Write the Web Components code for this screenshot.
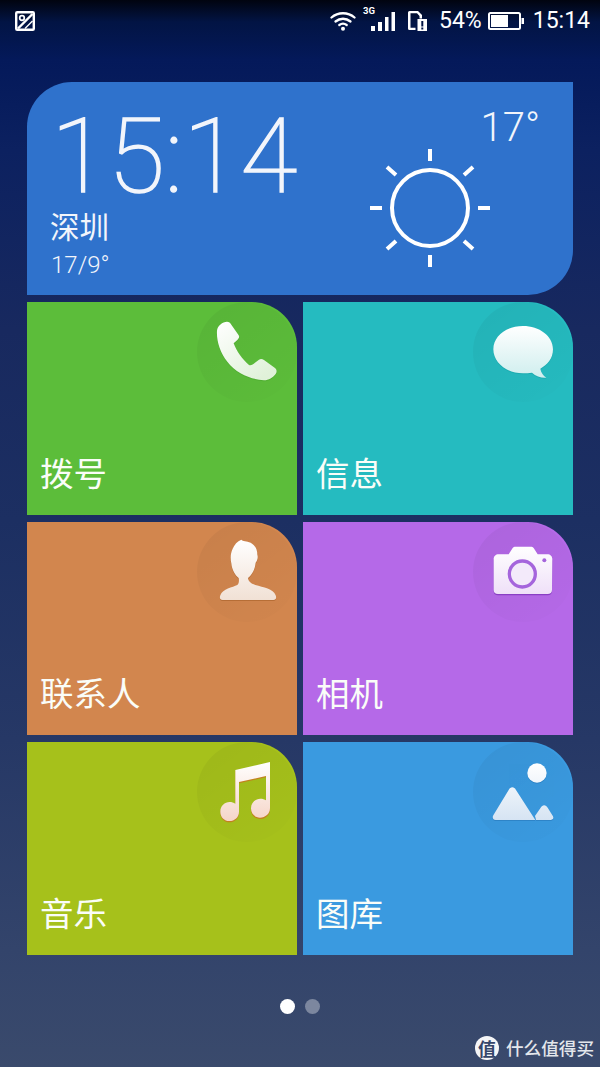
<!DOCTYPE html>
<html lang="zh-CN">
<head>
<meta charset="utf-8">
<title>Home</title>
<style>
html,body{margin:0;padding:0;width:600px;height:1067px;overflow:hidden}
body{font-family:Roboto,"Noto Sans CJK SC",sans-serif;color:#fff}
</style>
</head>
<body>
<home-screen>
  <status-bar slot="status"></status-bar>
  <weather-card slot="tiles" time="15:14" city="深圳" range="17/9°" temp="17°"></weather-card>
  <app-tile slot="tiles" label="拨号" icon="phone" color="#5cbd3a"></app-tile>
  <app-tile slot="tiles" label="信息" icon="message" color="#25bbc0"></app-tile>
  <app-tile slot="tiles" label="联系人" icon="contact" color="#d2864e"></app-tile>
  <app-tile slot="tiles" label="相机" icon="camera" color="#b569e8"></app-tile>
  <app-tile slot="tiles" label="音乐" icon="music" color="#a6c11b"></app-tile>
  <app-tile slot="tiles" label="图库" icon="gallery" color="#3a9ae0"></app-tile>
  <page-dots slot="dots"></page-dots>
  <site-mark slot="mark"></site-mark>
</home-screen>
<script>
const define=(name,css,html)=>{
  customElements.define(name,class extends HTMLElement{
    connectedCallback(){
      if(this.shadowRoot)return;
      const r=this.attachShadow({mode:'open'});
      r.innerHTML=`<style>${css}</style>${typeof html==='function'?html(this):html}`;
    }
  });
};

define('home-screen',`
:host{display:flex;flex-direction:column;position:relative;width:600px;height:1067px;overflow:hidden;
background:linear-gradient(180deg,#01040f 0,#021444 22px,#04195a 60px,#0c2160 150px,#18295f 330px,#1c2f62 520px,#263866 740px,#33446b 950px,#3a4a6c 1067px)}
.grid{display:grid;grid-template-columns:270px 270px;grid-auto-rows:213px;column-gap:6px;row-gap:7px;margin:42px 27px 0}
.dots{margin-top:44px}
`,`<slot name="status"></slot><div class="grid"><slot name="tiles"></slot></div><div class="dots"><slot name="dots"></slot></div><slot name="mark"></slot>`);

define('status-bar',`
:host{display:flex;align-items:center;height:40px;padding:2px 10px 0 15px;box-sizing:border-box;font:400 23px/38px Roboto,sans-serif;color:#fff}
svg{display:block;flex:none}
.sp{flex:1}
.net{position:relative;margin-left:15px;width:24px;height:38px}
.net b{position:absolute;left:-8px;top:3px;font:700 9.5px/11px Roboto,sans-serif}
.net svg{position:absolute;left:0;top:10px}
`,`
<svg width="20" height="20" viewBox="0 0 20 20"><rect x="1.200" y="1.200" width="17.600" height="17.600" rx="1" fill="none" stroke="#fff" stroke-width="2.400"/><path d="M3 17.500 17.500 3" stroke="#fff" stroke-width="2.400"/><circle cx="7" cy="7" r="2.300" fill="none" stroke="#fff" stroke-width="1.700"/><path fill="none" stroke="#fff" stroke-width="1.500" d="M10 17.500 17.500 10"/></svg>
<div class="sp"></div>
<svg width="26" height="20" viewBox="0 0 26 20"><g fill="none" stroke="#fff" stroke-width="2.300" stroke-linecap="round"><path d="M1.500 6.500C8 .8 18 .8 24.500 6.500"/><path d="M5.500 10.500C10 6.800 16 6.800 20.500 10.500"/><path d="M9.300 14C11.500 12.400 14.500 12.400 16.700 14"/></g><circle cx="13" cy="17.700" r="2" fill="#fff"/></svg>
<div class="net"><b>3G</b><svg width="24" height="20" viewBox="0 0 24 20"><g fill="#fff"><rect x="0" y="14" width="4" height="5"/><rect x="7" y="10" width="4" height="9"/><rect x="14" y="5" width="3.500" height="14"/><rect x="20.500" y="0" width="3.500" height="19"/></g></svg></div>
<svg width="19" height="20" viewBox="0 0 19 20" style="margin-left:13px"><path fill="#fff" fill-rule="evenodd" d="M1.500 0H10l4 4v3.500h-2.500V5L9 2.300H2.500v14.500h5V19H1.500A1.500 1.500 0 0 1 0 17.500v-16A1.500 1.500 0 0 1 1.500 0z"/><path fill="#fff" fill-rule="evenodd" d="M9.500 8H19v12H9.500zM13.300 10v5.500h2V10zm0 6.500v2h2v-2z"/></svg>
<span style="margin-left:12px">54%</span>
<svg width="36" height="18" viewBox="0 0 36 18" style="margin-left:6px"><rect x="1" y="1" width="31" height="16" rx="1.500" fill="none" stroke="#fff" stroke-width="2"/><rect x="3" y="3" width="17" height="12" fill="#fff"/><rect x="33.500" y="6" width="2.500" height="6" fill="#fff"/></svg>
<span style="margin-left:9px">15:14</span>
`);

define('weather-card',`
:host{display:flex;grid-column:1 / span 2;justify-content:space-between;background:#2f72cc;border-radius:45px 0 45px 0;color:#f2f5fb;font-family:Roboto,"Noto Sans CJK SC",sans-serif}
.l{padding:25px 0 0 24px;display:flex;flex-direction:column}
.t{font:100 104px/100px Roboto,sans-serif;-webkit-text-stroke:1.500px #f2f5fb;height:100px}
.c{font:400 29.500px/36px "Noto Sans CJK SC",sans-serif;margin:0 0 0 -1px}
.r{font:300 24px/28px Roboto,sans-serif;margin-top:8px}
.w{display:flex;flex-direction:column;align-items:flex-end;padding:22px 33px 0 0}
.d{font:300 40px/48px Roboto,sans-serif}
svg{display:block;margin:-6px 48px 0 0}
`,h=>`
<div class="l"><div class="t">${h.getAttribute('time')}</div><div class="c">${h.getAttribute('city')}</div><div class="r">${h.getAttribute('range')}</div></div>
<div class="w"><div class="d">${h.getAttribute('temp')}</div>
<svg width="124" height="124" viewBox="-62 -62 124 124"><circle r="38" fill="none" stroke="#fff" stroke-width="4"/><g stroke="#fff" stroke-width="4"><path d="M0-59V-47M0 47V59M-60 0H-48M48 0H60M-43-41-34-33M43-41 34-33M-43 41-34 33M43 41 34 33"/></g></svg></div>
`);

const ICONS={
phone:`<g transform="translate(-17 -2) scale(.3333)"><defs><linearGradient id="g" x1="0" y1="0" x2=".7" y2="1"><stop offset="0" stop-color="#fff"/><stop offset="1" stop-color="#e0f1d9"/></linearGradient></defs><path fill="#3f9a25" opacity=".35" transform="translate(0 3)" d="M111 92C112 78 128 65 141 65C147 65 151 69 154 74L176 106C179 111 177 115 172 120L161 130C170 155 187 178 207 195C214 197 219 193 225 188L237 179C242 176 247 177 252 180L285 204C291 209 291 216 287 222C279 233 266 241 252 241C215 238 170 222 142 185C120 158 109 120 111 92Z"/><path fill="url(#g)" d="M111 92C112 78 128 65 141 65C147 65 151 69 154 74L176 106C179 111 177 115 172 120L161 130C170 155 187 178 207 195C214 197 219 193 225 188L237 179C242 176 247 177 252 180L285 204C291 209 291 216 287 222C279 233 266 241 252 241C215 238 170 222 142 185C120 158 109 120 111 92Z"/></g>`,
message:`<g transform="translate(-13 -2) scale(.3333)"><defs><linearGradient id="g" x1="0" y1="0" x2="0" y2="1"><stop offset="0" stop-color="#fff"/><stop offset="1" stop-color="#cfeeee"/></linearGradient></defs><path fill="#129aa0" opacity=".4" transform="translate(0 3)" d="M189 78C238 78 279 108 279 148C279 176 262 195 241 206C243 217 249 226 259 233C243 234 228 229 216 218C207 219 198 220 189 220C140 220 100 188 100 148C100 108 140 78 189 78Z"/><path fill="url(#g)" d="M189 78C238 78 279 108 279 148C279 176 262 195 241 206C243 217 249 226 259 233C243 234 228 229 216 218C207 219 198 220 189 220C140 220 100 188 100 148C100 108 140 78 189 78Z"/></g>`,
contact:`<g transform="translate(-17 -2) scale(.3333)"><defs><linearGradient id="g" x1="0" y1="0" x2="0" y2="1"><stop offset="0" stop-color="#fff"/><stop offset="1" stop-color="#f1e1d5"/></linearGradient></defs><path fill="#a75f28" opacity=".6" transform="translate(0 3)" d="M184 59C188 65 200 62 212 68C226 76 232 90 232 104C235 112 232 122 227 128C225 148 216 164 204 174C205 184 212 190 226 195C250 202 280 206 287 226C290 234 288 240 280 240H128C120 240 118 234 121 226C128 206 158 202 172 195C176 192 178 184 176 174C165 166 156 150 154 130C151 118 151 100 158 86C163 74 172 64 184 59Z"/><path fill="url(#g)" d="M184 59C188 65 200 62 212 68C226 76 232 90 232 104C235 112 232 122 227 128C225 148 216 164 204 174C205 184 212 190 226 195C250 202 280 206 287 226C290 234 288 240 280 240H128C120 240 118 234 121 226C128 206 158 202 172 195C176 192 178 184 176 174C165 166 156 150 154 130C151 118 151 100 158 86C163 74 172 64 184 59Z"/></g>`,
camera:`<g transform="translate(-13 -2) scale(.3333)"><defs><linearGradient id="g" x1="0" y1="0" x2="0" y2="1"><stop offset="0" stop-color="#fff"/><stop offset="1" stop-color="#efe0f8"/></linearGradient></defs><path fill="#8a3fc4" transform="translate(0 4)" d="M116 103H146L158 84C160 81 163 80 167 80H212C216 80 219 81 221 84L233 103H262C271 103 277 109 277 118L276 210C276 218 271 222 263 222H114C106 222 101 218 101 210L101 118C101 109 107 103 116 103Z"/><path fill="url(#g)" d="M116 103H146L158 84C160 81 163 80 167 80H212C216 80 219 81 221 84L233 103H262C271 103 277 109 277 118L276 210C276 218 271 222 263 222H114C106 222 101 218 101 210L101 118C101 109 107 103 116 103Z"/><circle cx="187" cy="162" r="39" fill="#f3eafa" stroke="#a565dc" stroke-width="10"/><circle cx="253" cy="121" r="6" fill="#a565dc"/></g>`,
music:`<g transform="translate(-17 -2) scale(.3333)"><defs><linearGradient id="g" x1="0" y1="0" x2="0" y2="1"><stop offset="0" stop-color="#fff"/><stop offset="1" stop-color="#f5d5c8"/></linearGradient></defs><path fill="#c2821f" transform="translate(0 4)" d="M166 90 270 66V205C270 222 256 233 240 233C225 233 213 222 213 205C213 188 226 176 241 176C248 176 254 178 258 181V108L177 126V215C177 232 164 243 148 243C133 243 121 232 121 215C121 198 134 186 149 186C155 186 161 188 166 191Z"/><path fill="url(#g)" d="M166 90 270 66V205C270 222 256 233 240 233C225 233 213 222 213 205C213 188 226 176 241 176C248 176 254 178 258 181V108L177 126V215C177 232 164 243 148 243C133 243 121 232 121 215C121 198 134 186 149 186C155 186 161 188 166 191Z"/></g>`,
gallery:`<g transform="translate(-13 -2) scale(.3333)"><defs><linearGradient id="g" gradientUnits="userSpaceOnUse" x1="0" y1="70" x2="0" y2="240"><stop offset="0" stop-color="#fff"/><stop offset="1" stop-color="#d6e4f3"/></linearGradient></defs><g fill="#2a7cbf" opacity=".7" transform="translate(0 3)"><circle cx="231" cy="99" r="29"/><path d="M146 150C151 139 163 139 168 150L226 240H107C99 240 96 233 100 226Z"/><path d="M242 203C247 193 258 193 263 203L279 229C282 235 279 240 272 240H228L225 228Z"/></g><g fill="url(#g)"><circle cx="231" cy="99" r="29"/><path d="M146 150C151 139 163 139 168 150L226 240H107C99 240 96 233 100 226Z"/><path d="M242 203C247 193 258 193 263 203L279 229C282 235 279 240 272 240H228L225 228Z"/></g></g>`
};

define('app-tile',`
:host{display:flex;flex-direction:column;justify-content:space-between;background:var(--c);border-radius:0 45px 0 0;overflow:hidden}
svg{display:block;align-self:flex-end;width:100px;height:100px}
.l{font:400 33.500px/40px "Noto Sans CJK SC",sans-serif;color:#fafdf8;padding:0 0 23px 13px}
`,h=>{
  h.style.setProperty('--c',h.getAttribute('color'));
  return `<svg viewBox="0 0 100 100"><defs><linearGradient id="o" x1="0" y1=".2" x2=".6" y2="1"><stop offset="0" stop-color="#000" stop-opacity=".045"/><stop offset="1" stop-color="#000" stop-opacity=".012"/></linearGradient></defs><circle cx="50" cy="50" r="50" fill="url(#o)"/>${ICONS[h.getAttribute('icon')]}</svg><div class="l">${h.getAttribute('label')}</div>`;
});

define('page-dots',`
:host{display:flex;justify-content:center;gap:10px;height:15px}
i{display:block;width:15px;height:15px;border-radius:50%;background:#fff}
i+i{background:#7c879f}
`,`<i></i><i></i>`);

define('site-mark',`
:host{position:absolute;left:475px;top:1036px;display:flex;align-items:center;gap:7px;height:24px;color:#e3e6eb;font:500 17.600px/24px "Noto Sans CJK SC",sans-serif;white-space:nowrap}
b{display:block;width:24px;height:24px;border-radius:50%;background:#f4f5f7;color:#34466a;font:700 18px/24px "Noto Sans CJK SC",sans-serif;text-align:center}
`,`<b>值</b><span>什么值得买</span>`);
</script>
</body>
</html>
